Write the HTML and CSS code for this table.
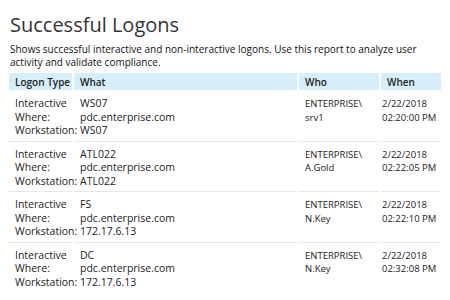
FILE: index.html
```html
<!DOCTYPE html>
<html>
<head>
<meta charset="utf-8">
<link rel="stylesheet" href="styles.css">
</head>
<body>
<div class="page">
  <h1 class="title">Successful Logons</h1>
  <p class="desc">Shows successful interactive and non-interactive logons. Use this report to analyze user activity and validate compliance.</p>
  <table class="report">
    <thead>
      <tr>
        <th class="c-type">Logon Type</th>
        <th class="c-what">What</th>
        <th class="c-who">Who</th>
        <th class="c-when">When</th>
      </tr>
    </thead>
    <tbody>
      <tr>
        <td class="c-type">Interactive<br>Where:<br>Workstation:</td>
        <td class="c-what">WS07<br>pdc.enterprise.com<br>WS07</td>
        <td class="c-who">ENTERPRISE\<br>srv1</td>
        <td class="c-when">2/22/2018<br>02:20:00 PM</td>
      </tr>
      <tr>
        <td class="c-type">Interactive<br>Where:<br>Workstation:</td>
        <td class="c-what">ATL022<br>pdc.enterprise.com<br>ATL022</td>
        <td class="c-who">ENTERPRISE\<br>A.Gold</td>
        <td class="c-when">2/22/2018<br>02:22:05 PM</td>
      </tr>
      <tr>
        <td class="c-type">Interactive<br>Where:<br>Workstation:</td>
        <td class="c-what">FS<br>pdc.enterprise.com<br>172.17.6.13</td>
        <td class="c-who">ENTERPRISE\<br>N.Key</td>
        <td class="c-when">2/22/2018<br>02:22:10 PM</td>
      </tr>
      <tr>
        <td class="c-type">Interactive<br>Where:<br>Workstation:</td>
        <td class="c-what">DC<br>pdc.enterprise.com<br>172.17.6.13</td>
        <td class="c-who">ENTERPRISE\<br>N.Key</td>
        <td class="c-when">2/22/2018<br>02:32:08 PM</td>
      </tr>
    </tbody>
  </table>
</div>
</body>
</html>
```

FILE: styles.css
```css
html, body {
  margin: 0;
  padding: 0;
  background: #ffffff;
}
body {
  font-family: "Open Sans", "Noto Sans", sans-serif;
  color: #222222;
}
.page {
  padding: 10px 9px 0 9px;
}
.title {
  margin: 0 0 0 1px;
  font-size: 20px;
  font-weight: 400;
  line-height: 30px;
  color: #333333;
}
.desc {
  margin: 3px 0 5px 1px;
  font-size: 10px;
  line-height: 12.5px;
  color: #111111;
}
.report {
  width: 432px;
  border-collapse: collapse;
  table-layout: fixed;
}
.report th {
  background: #d6eef9;
  font-size: 10px;
  font-weight: 600;
  text-align: left;
  height: 17px;
  padding: 0 0 0 6px;
  border-right: 2px solid #ffffff;
  color: #222222;
}
.report th:last-child {
  border-right: 0;
}
.report td {
  font-size: 10.5px;
  line-height: 13.5px;
  vertical-align: top;
  padding: 6px 0 3px 6px;
  border-bottom: 1px solid #e6e6e6;
  border-right: 2px solid transparent;
}
.report tbody tr:first-child td {
  padding-top: 7px;
}
.report tbody tr:last-child td {
  border-bottom: 0;
}
.report td.c-who {
  font-size: 9.5px;
}
.report td.c-when {
  font-size: 9.5px;
  padding-left: 1px;
}
.c-type { width: 57px; }
.c-what { width: 217px; }
.c-who { width: 74px; }
.c-when { width: 54px; }
```
